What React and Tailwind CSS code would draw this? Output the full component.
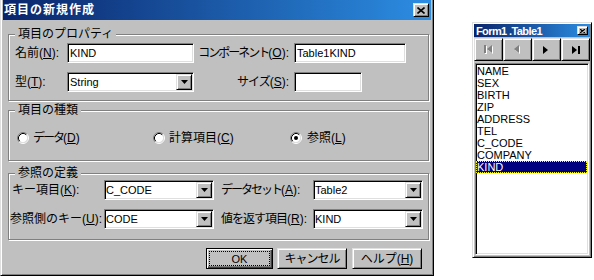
import React from "react";

// classic 3D borders
const raised =
  "bg-[#c0c0c0] border border-t-[#dfdfdf] border-l-[#dfdfdf] border-r-black border-b-black shadow-[inset_1px_1px_0_#fff,inset_-1px_-1px_0_#808080]";
const sunken =
  "bg-white border border-t-[#808080] border-l-[#808080] border-r-white border-b-white shadow-[inset_1px_1px_0_#000,inset_-1px_-1px_0_#dfdfdf]";

function DownArrow() {
  return (
    <svg width="7" height="4" viewBox="0 0 7 4">
      <path d="M0 0H7L3.5 4Z" fill="#000" />
    </svg>
  );
}

function TextBox({ value, width }) {
  return (
    <div className={`${sunken} ${width} h-[20px] flex items-center pl-[2px] text-[11px] leading-[16px]`}>
      {value}
    </div>
  );
}

function Select({ value, width, pad }) {
  return (
    <div className={`${sunken} ${width} ${pad} h-[20px] flex items-center pr-[1px]`}>
      <span className="flex-1 text-[11px] leading-[16px]">{value}</span>
      <div className={`${raised} w-[16px] h-[16px] flex items-center justify-center`}>
        <DownArrow />
      </div>
    </div>
  );
}

function Group({ label, className, children }) {
  return (
    <div
      className={`relative border border-[#808080] shadow-[inset_1px_1px_0_#fff,1px_1px_0_#fff] ${className}`}
    >
      <span className="absolute -top-[8px] left-[6px] px-[3px] bg-[#c0c0c0] text-[12px] leading-[14px]">
        {label}
      </span>
      {children}
    </div>
  );
}

function Radio({ checked }) {
  return (
    <svg width="12" height="12" viewBox="0 0 12 12" className="shrink-0">
      <circle cx="6" cy="6" r="4.5" fill="#fff" />
      <path d="M2.11 9.89A5.5 5.5 0 0 1 9.89 2.11" stroke="#808080" fill="none" />
      <path d="M9.89 2.11A5.5 5.5 0 0 1 2.11 9.89" stroke="#fff" fill="none" />
      <path d="M2.82 9.18A4.5 4.5 0 0 1 9.18 2.82" stroke="#000" fill="none" />
      <path d="M9.18 2.82A4.5 4.5 0 0 1 2.82 9.18" stroke="#dfdfdf" fill="none" />
      {checked && <circle cx="6" cy="6" r="2" fill="#000" />}
    </svg>
  );
}

function NavIcon({ kind }) {
  if (kind === "first" || kind === "prev") {
    const shape =
      kind === "first" ? (
        <>
          <rect x="0" y="0" width="2" height="8" />
          <path d="M8 0V8L3 4Z" />
        </>
      ) : (
        <path d="M6 0V8L1 4Z" />
      );
    return (
      <svg width="10" height="9" viewBox="0 0 10 9">
        <g fill="#fff" transform="translate(1,1)">{shape}</g>
        <g fill="#808080">{shape}</g>
      </svg>
    );
  }
  return (
    <svg width="9" height="8" viewBox="0 0 9 8">
      <path d="M1 0V8L6 4Z" fill="#000" />
      {kind === "last" && <rect x="7" y="0" width="2" height="8" fill="#000" />}
    </svg>
  );
}

const fields = ["NAME", "SEX", "BIRTH", "ZIP", "ADDRESS", "TEL", "C_CODE", "COMPANY", "KIND"];

export default function App() {
  return (
    <div className="w-[594px] h-[280px] bg-white flex items-start overflow-hidden text-black font-['Liberation_Sans','Noto_Sans_CJK_JP',sans-serif]">
      {/* Dialog */}
      <div className="w-[434px] h-[276px] shrink-0 flex flex-col bg-[#c0c0c0] border-l border-r border-b border-l-[#dfdfdf] border-r-black border-b-black shadow-[inset_1px_0_0_#fff,inset_-1px_-1px_0_#808080] px-[2px] pb-[2px]">
        {/* Title bar */}
        <div className="h-[20px] flex items-center justify-between pl-[1px] pr-[2px] bg-[linear-gradient(to_right,#0a246a,#2c8de2)]">
          <span className="text-white font-bold text-[12px] leading-[16px] tracking-[1px]">項目の新規作成</span>
          <div className={`${raised} w-[16px] h-[14px] flex items-center justify-center`}>
            <svg width="8" height="7" viewBox="0 0 8 7">
              <path d="M0.5 0.5L7.5 6.5M7.5 0.5L0.5 6.5" stroke="#000" strokeWidth="1.6" />
            </svg>
          </div>
        </div>

        <div className="flex-1 flex flex-col pl-[5px] pr-[2px] text-[12px]">
          {/* 項目のプロパティ */}
          <Group label="項目のプロパティ" className="mt-[14px] h-[67px] flex flex-col gap-[9px] pt-[8px] pl-[6px]">
            <div className="flex items-center h-[20px] leading-[20px]">
              <span className="w-[52px]">
                名前(<u>N</u>):
              </span>
              <TextBox value="KIND" width="w-[127px]" />
              <span className="w-[100px] text-right pr-[5px]">
                <span className="tracking-[-2px]">コンポーネント</span>(<u>O</u>):
              </span>
              <TextBox value="Table1KIND" width="w-[112px]" />
            </div>
            <div className="flex items-center h-[20px] leading-[20px]">
              <span className="w-[52px]">
                型(<u>T</u>):
              </span>
              <Select value="String" width="w-[127px]" pad="pl-[2px]" />
              <span className="w-[100px] text-right pr-[5px]">
                <span className="tracking-[-1px]">サイズ</span>(<u>S</u>):
              </span>
              <TextBox value="" width="w-[68px]" />
            </div>
          </Group>

          {/* 項目の種類 */}
          <Group label="項目の種類" className="mt-[9px] h-[51px] flex items-center pt-[5px] pl-[8px]">
            <div className="w-[136px] flex items-center gap-[4px]">
              <Radio />
              <span>
                <span className="tracking-[-2px]">データ</span>(<u>D</u>)
              </span>
            </div>
            <div className="w-[137px] flex items-center gap-[4px]">
              <Radio />
              <span>
                計算項目(<u>C</u>)
              </span>
            </div>
            <div className="flex items-center gap-[5px]">
              <Radio checked />
              <span>
                参照(<u>L</u>)
              </span>
            </div>
          </Group>

          {/* 参照の定義 */}
          <Group label="参照の定義" className="mt-[12px] h-[67px] flex flex-col gap-[9px] pt-[6px] pl-[1px]">
            <div className="flex items-center h-[20px] leading-[20px]">
              <span className="w-[94px] pl-[2px]">
                キー項目(<u>K</u>):
              </span>
              <Select value="C_CODE" width="w-[110px]" pad="pl-[1px]" />
              <span className="w-[99px] pl-[7px]">
                <span className="tracking-[-2px]">データセット</span>(<u>A</u>):
              </span>
              <Select value="Table2" width="w-[110px]" pad="pl-[1px]" />
            </div>
            <div className="flex items-center h-[20px] leading-[20px]">
              <span className="w-[94px]">
                参照側のキー(<u>U</u>):
              </span>
              <Select value="CODE" width="w-[110px]" pad="pl-[1px]" />
              <span className="w-[99px] pl-[7px]">
                <span className="tracking-[-1px]">値を返す項目</span>(<u>R</u>):
              </span>
              <Select value="KIND" width="w-[110px]" pad="pl-[1px]" />
            </div>
          </Group>

          {/* Buttons */}
          <div className="mt-[8px] flex justify-end pr-[7px] text-[12px]">
            <div className="w-[67px] h-[21px] flex p-[2px] bg-[#c0c0c0] border border-black shadow-[inset_1px_1px_0_#fff,inset_-1px_-1px_0_#404040,inset_-2px_-2px_0_#808080]">
              <div className="flex-1 flex items-center justify-center border border-dotted border-black leading-[14px] text-[11px]">
                OK
              </div>
            </div>
            <div className={`${raised} ml-[4px] w-[70px] h-[21px] flex items-center justify-center leading-[14px]`}>
              <span className="tracking-[-1px]">キャンセル</span>
            </div>
            <div className={`${raised} ml-[5px] w-[70px] h-[21px] flex items-center justify-center leading-[14px]`}>
              ヘルプ(<u>H</u>)
            </div>
          </div>
        </div>
      </div>

      {/* Form1.Table1 tool window */}
      <div className={`${raised} ml-[38px] mt-[22px] w-[120px] h-[236px] shrink-0 flex flex-col p-[1px]`}>
        <div className="h-[13px] flex items-center justify-between pl-[2px] pr-[2px] bg-[linear-gradient(to_right,#0a246a,#2c8de2)]">
          <span className="text-white font-bold text-[11px] leading-[12px] tracking-[-0.6px]">Form1 .Table1</span>
          <div className={`${raised} w-[11px] h-[9px] flex items-center justify-center`}>
            <svg width="5" height="4" viewBox="0 0 5 4">
              <path d="M0 0L5 4M5 0L0 4" stroke="#000" strokeWidth="1.2" />
            </svg>
          </div>
        </div>
        <div className="mt-[1px] h-[23px] flex">
          {["first", "prev", "next", "last"].map((k) => (
            <div key={k} className={`${raised} flex-1 flex items-center justify-center`}>
              <NavIcon kind={k} />
            </div>
          ))}
        </div>
        <div className={`${sunken} mt-[2px] mb-[1px] mx-[1px] flex-1 flex flex-col pt-[1px] pr-[1px] text-[11px] leading-[12px]`}>
          {fields.map((f) => (
            <div
              key={f}
              className={
                f === "KIND"
                  ? "pl-[1px] h-[12px] bg-[#000080] text-white outline outline-1 outline-dotted outline-[#ffff00] -outline-offset-1"
                  : "pl-[1px] h-[12px]"
              }
            >
              {f}
            </div>
          ))}
        </div>
      </div>
    </div>
  );
}
